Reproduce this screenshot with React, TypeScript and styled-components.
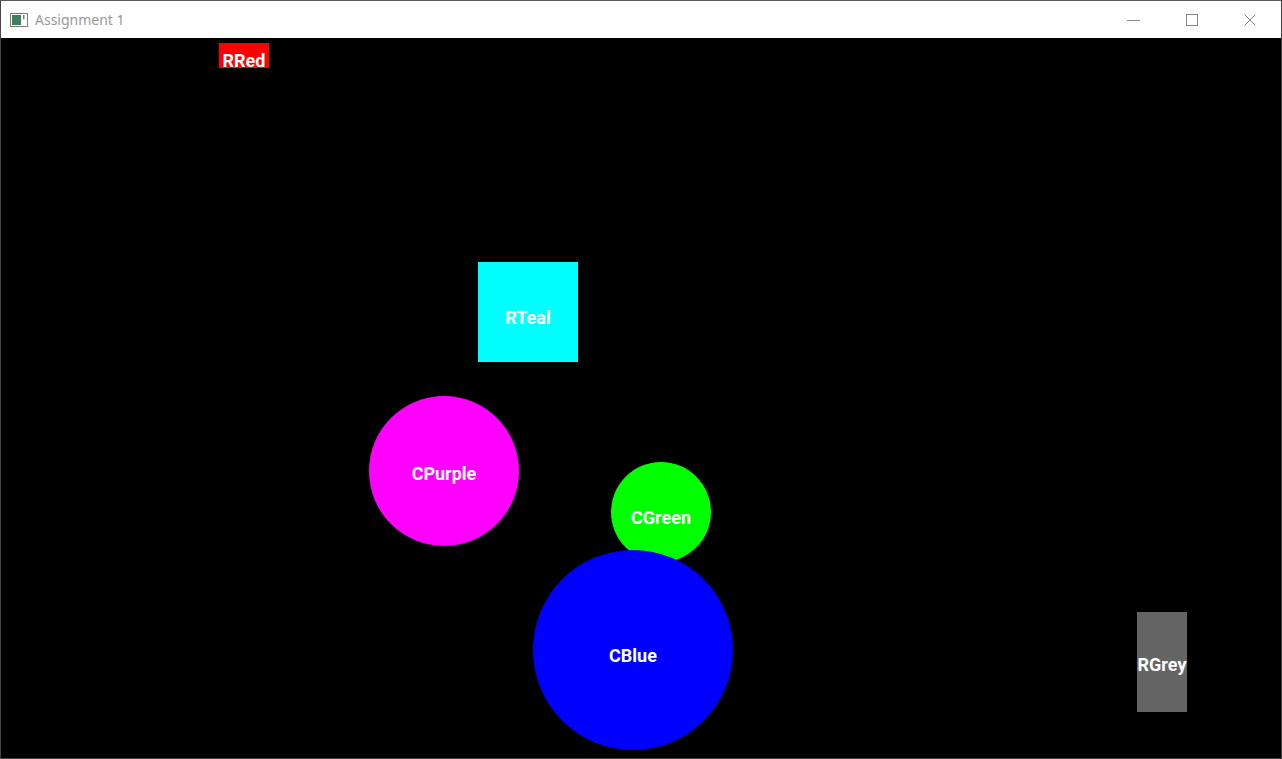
import React from "react";
import styled, { createGlobalStyle } from "styled-components";

const Global = createGlobalStyle`
  html, body { margin: 0; padding: 0; background: #000; }
  body { overflow: hidden; }
`;

const Window = styled.div`
  width: 1282px;
  height: 759px;
  box-sizing: border-box;
  border: 1px solid #444444;
  border-top-color: #5a5a5a;
  display: flex;
  flex-direction: column;
  background: #000;
`;

const TitleBar = styled.div`
  height: 37px;
  flex: none;
  background: #fff;
  display: flex;
  align-items: center;
`;

const AppIcon = styled.svg`
  margin-left: 9px;
  width: 18px;
  height: 14px;
  flex: none;
`;

const Title = styled.span`
  margin-left: 7px;
  font-family: "Noto Sans", "Open Sans", sans-serif;
  font-size: 14px;
  color: #999999;
  flex: 1;
`;

const Controls = styled.div`
  display: flex;
  height: 100%;
  padding-right: 2px;
`;

const ControlButton = styled.div<{ $w: number }>`
  width: ${(p) => p.$w}px;
  height: 100%;
  display: flex;
  align-items: center;
  justify-content: center;
`;

const Canvas = styled.div`
  position: relative;
  flex: 1;
  background: #000;
  overflow: hidden;
`;

const Shape = styled.div<{ $round?: boolean; $color: string }>`
  position: absolute;
  background: ${(p) => p.$color};
  border-radius: ${(p) => (p.$round ? "50%" : "0")};
  display: flex;
  align-items: center;
  justify-content: center;
`;

const Label = styled.span<{ $dy: number }>`
  font-family: Roboto, "Noto Sans", sans-serif;
  font-weight: 700;
  font-size: 18px;
  color: #fff;
  white-space: nowrap;
  transform: translateY(${(p) => p.$dy}px);
`;

type Item = {
  name: string;
  color: string;
  round?: boolean;
  x: number;
  y: number;
  w: number;
  h: number;
  dy: number;
};

const items: Item[] = [
  { name: "RRed", color: "#ff0000", x: 218, y: 5, w: 50, h: 25, dy: 5 },
  { name: "RTeal", color: "#00ffff", x: 477, y: 224, w: 100, h: 100, dy: 5 },
  { name: "CPurple", color: "#ff00ff", round: true, x: 368, y: 358, w: 150, h: 150, dy: 2 },
  { name: "CGreen", color: "#00ff00", round: true, x: 610, y: 424, w: 100, h: 100, dy: 5 },
  { name: "CBlue", color: "#0000ff", round: true, x: 532, y: 512, w: 200, h: 200, dy: 5 },
  { name: "RGrey", color: "#646464", x: 1136, y: 574, w: 50, h: 100, dy: 2 },
];

export default function App() {
  return (
    <>
      <Global />
      <Window>
        <TitleBar>
          <AppIcon viewBox="0 0 18 14">
            <rect x="0.5" y="0.5" width="17" height="13" fill="#fff" stroke="#7a7a7a" />
            <rect x="2" y="2" width="9" height="10" fill="#3f7f5f" />
            <rect x="13" y="2" width="1.5" height="4" fill="#5a8a7a" />
          </AppIcon>
          <Title>Assignment 1</Title>
          <Controls>
            <ControlButton $w={58}>
              <svg width="13" height="12" viewBox="0 0 13 12">
                <line x1="0" y1="6.5" x2="13" y2="6.5" stroke="#8a8a8a" strokeWidth="1" />
              </svg>
            </ControlButton>
            <ControlButton $w={59}>
              <svg width="12" height="12" viewBox="0 0 12 12">
                <rect x="0.5" y="0.5" width="11" height="11" fill="none" stroke="#8a8a8a" strokeWidth="1" />
              </svg>
            </ControlButton>
            <ControlButton $w={58}>
              <svg width="12" height="12" viewBox="0 0 12 12">
                <path d="M0.5 0.5 L11.5 11.5 M11.5 0.5 L0.5 11.5" stroke="#8a8a8a" strokeWidth="1" />
              </svg>
            </ControlButton>
          </Controls>
        </TitleBar>
        <Canvas>
          {items.map((it) => (
            <Shape
              key={it.name}
              $color={it.color}
              $round={it.round}
              style={{ left: it.x, top: it.y, width: it.w, height: it.h }}
            >
              <Label $dy={it.dy}>{it.name}</Label>
            </Shape>
          ))}
        </Canvas>
      </Window>
    </>
  );
}
